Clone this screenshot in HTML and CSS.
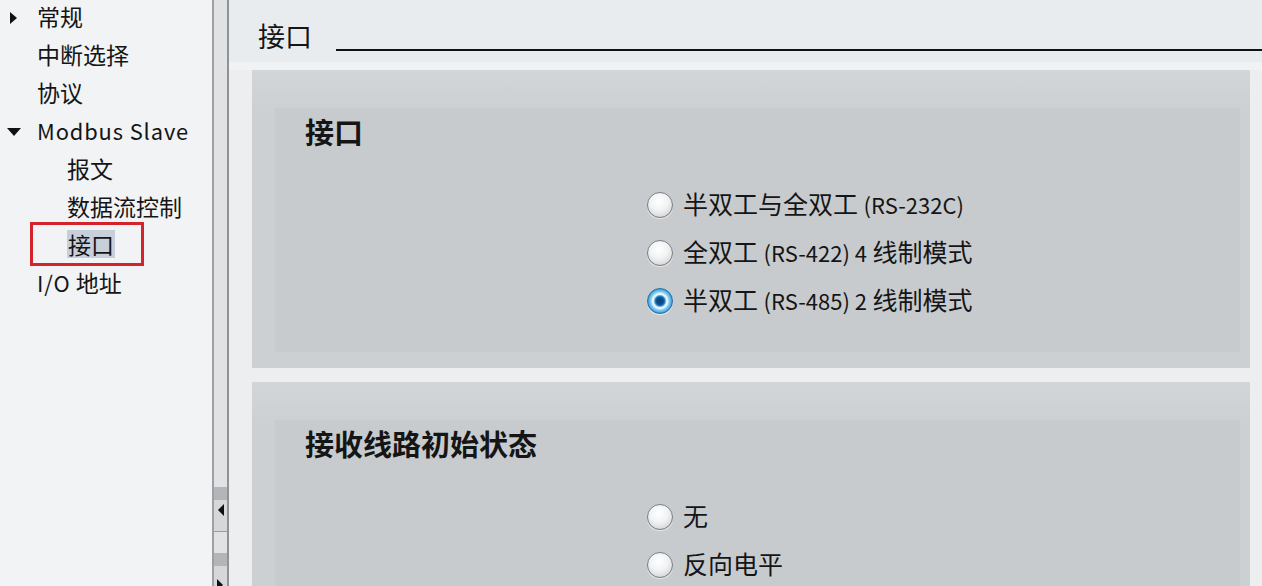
FILE: index.html
```html
<!DOCTYPE html>
<html lang="zh-CN">

<head>
    <meta charset="UTF-8">
    <meta name="viewport" content="width=device-width, initial-scale=1.0">
    <title>接口</title>
    <link rel="stylesheet" href="styles.css">
</head>

<body>
    <div class="window">
        <nav class="tree">
            <ul>
                <li class="node"><span class="twisty"><span class="arrow-right"></span></span>常规</li>
                <li class="node"><span class="twisty"></span>中断选择</li>
                <li class="node"><span class="twisty"></span>协议</li>
                <li class="node"><span class="twisty"><span class="arrow-down"></span></span><span class="latin">Modbus Slave</span></li>
                <li class="leaf">报文</li>
                <li class="leaf">数据流控制</li>
                <li class="leaf current"><span class="sel">接口</span><span class="mark"></span></li>
                <li class="node"><span class="twisty"></span><span><span class="latin">I/O</span> 地址</span></li>
            </ul>
        </nav>

        <div class="splitter">
            <div class="scroll-btn"><span class="arrow-left"></span></div>
            <div class="scroll-gap"></div>
            <div class="scroll-btn"><span class="arrow-right"></span></div>
        </div>

        <main class="content">
            <div class="page-title">
                <h1>接口</h1>
                <span class="rule"></span>
            </div>

            <section class="group">
                <div class="group-body">
                    <h2>接口</h2>
                    <div class="options">
                        <div class="option"><span class="radio"></span><span>半双工与全双工 <span class="latin">(RS-232C)</span></span></div>
                        <div class="option"><span class="radio"></span><span>全双工 <span class="latin">(RS-422) 4</span> 线制模式</span></div>
                        <div class="option"><span class="radio checked"></span><span>半双工 <span class="latin">(RS-485) 2</span> 线制模式</span></div>
                    </div>
                </div>
            </section>

            <section class="group last">
                <div class="group-body">
                    <h2>接收线路初始状态</h2>
                    <div class="options">
                        <div class="option"><span class="radio"></span><span>无</span></div>
                        <div class="option"><span class="radio"></span><span>反向电平</span></div>
                    </div>
                </div>
            </section>
        </main>
    </div>
</body>

</html>
```

FILE: styles.css
```css
* {
    box-sizing: border-box;
}

body {
    margin: 0;
    height: 586px;
    overflow: hidden;
    font-family: "Noto Sans CJK SC", sans-serif;
    color: #151515;
}

.window {
    display: flex;
    height: 586px;
}

/* left tree */
.tree {
    width: 212px;
    flex-shrink: 0;
    background-color: #f1f3f5;
}

.tree ul {
    list-style: none;
    margin: -3px 0 0 0;
    padding: 0;
}

.tree li {
    display: flex;
    align-items: center;
    height: 38px;
    font-size: 23px;
    white-space: nowrap;
    position: relative;
}

.twisty {
    width: 37px;
    height: 38px;
    display: flex;
    align-items: center;
    justify-content: center;
    padding: 3px 10px 0 0;
}

.latin {
    font-size: 0.95em;
    letter-spacing: 0.9px;
}

.arrow-right {
    width: 0;
    height: 0;
    border-top: 6px solid transparent;
    border-bottom: 6px solid transparent;
    border-left: 7px solid #111;
}

.arrow-down {
    width: 0;
    height: 0;
    border-left: 7px solid transparent;
    border-right: 7px solid transparent;
    border-top: 8px solid #111;
}

.leaf {
    padding-left: 67px;
}

.sel {
    background-color: #c7cfdb;
    padding: 0 1px;
    line-height: 28px;
}

.mark {
    position: absolute;
    left: 30px;
    top: -3px;
    width: 114px;
    height: 44px;
    border: 3px solid #d3242c;
}

/* splitter with scroll buttons */
.splitter {
    width: 17px;
    flex-shrink: 0;
    background-color: #e0e2e4;
    border-left: 2px solid #9da1a5;
    border-right: 2px solid #8f9397;
    display: flex;
    flex-direction: column;
    justify-content: flex-end;
}

.scroll-btn {
    height: 44px;
    background: linear-gradient(#b3b6b9 0, #b3b6b9 13px, #d5d7d9 13px);
    display: flex;
    align-items: center;
    justify-content: center;
    padding-top: 2px;
}

.scroll-btn:last-child {
    height: 33px;
    padding-top: 26px;
    justify-content: flex-start;
    align-items: flex-start;
    padding-left: 3px;
}

.scroll-gap {
    height: 22px;
    border-top: 1px solid #9a9ea2;
}

.arrow-left {
    width: 0;
    height: 0;
    border-top: 6px solid transparent;
    border-bottom: 6px solid transparent;
    border-right: 6px solid #111;
}

.scroll-btn .arrow-right {
    border-left-width: 6px;
}

/* right side */
.content {
    flex: 1;
    background-color: #eceef0;
    overflow: hidden;
}

.page-title {
    height: 70px;
    display: flex;
    align-items: flex-start;
    padding: 20px 0 0 29px;
    background: linear-gradient(#e9ecee 0, #e9ecee 62px, #f1f2f3 62px);
}

.page-title h1 {
    margin: 0;
    font-size: 27px;
    font-weight: normal;
    line-height: 32px;
}

.rule {
    flex: 1;
    height: 2px;
    margin: 29px 0 0 24px;
    background-color: #111;
}

.group {
    margin: 0 12px 0 23px;
    height: 298px;
    padding: 38px 10px 16px 23px;
    background: linear-gradient(#d3d6d9, #cdd0d3 40px);
}

.group.last {
    margin-top: 14px;
    height: 220px;
    padding-bottom: 0;
}

.group-body {
    height: 100%;
    padding: 6px 0 0 30px;
    background-color: #c8cbce;
}

.group-body h2 {
    margin: 0;
    font-size: 29px;
    font-weight: bold;
    line-height: 34px;
}

.options {
    margin: 31px 0 0 342px;
}

.option {
    display: flex;
    align-items: center;
    gap: 10px;
    height: 48px;
    font-size: 25px;
    white-space: pre;
}

.option .latin {
    font-size: 0.88em;
    letter-spacing: 0;
}

.radio {
    width: 26px;
    height: 26px;
    margin-top: 4px;
    border-radius: 50%;
    border: 1px solid #7b7f83;
    background: radial-gradient(circle at 45% 35%, #ffffff 0, #f1f2f3 45%, #c3c6c9 100%);
    box-shadow: 0 1px 1px rgba(255, 255, 255, 0.6);
    flex-shrink: 0;
}

.radio.checked {
    border-color: #2c6fa6;
    background: radial-gradient(circle, #0a457f 0, #0d4f8e 3.5px, #2f86c8 5px, #dff2fc 6.5px, #eaf7fd 7.5px, #8fd2f2 9px, #55b0e4 11px, #2f8ccf 12.5px);
}
```
